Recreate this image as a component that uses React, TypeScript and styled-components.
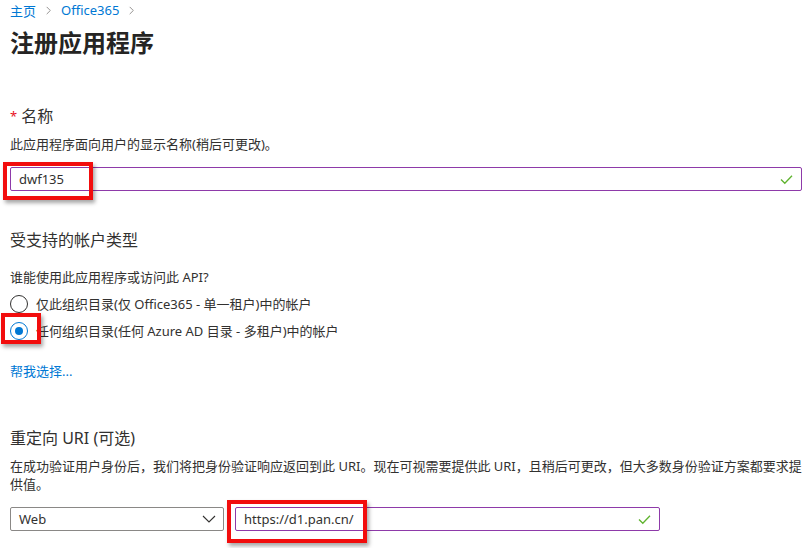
import React from 'react';
import styled, { createGlobalStyle } from 'styled-components';

const GlobalStyle = createGlobalStyle`
  html, body {
    margin: 0;
    padding: 0;
    background: #ffffff;
  }
  body {
    font-family: "Noto Sans", "Noto Sans CJK SC", sans-serif;
    color: #323130;
  }
`;

const Page = styled.div`
  width: 812px;
  height: 548px;
  overflow: hidden;
  padding: 0 10px;
  box-sizing: border-box;
`;

const Breadcrumb = styled.nav`
  display: flex;
  align-items: center;
  gap: 6px;
  height: 20px;
  font-size: 13px;

  a {
    color: #0078d4;
    text-decoration: none;
  }
`;

const Sep = styled.span`
  display: inline-flex;
  color: #8a8886;
  margin: 0 2px;
`;

const Title = styled.h1`
  margin: 9px 0 0 0;
  font-size: 24px;
  line-height: 28px;
  font-weight: 700;
  color: #252423;
`;

const Section = styled.section<{ $top: number }>`
  margin-top: ${({ $top }) => $top}px;
`;

const Heading = styled.h2`
  margin: 0;
  font-size: 16px;
  line-height: 22px;
  font-weight: 400;
  color: #323130;
`;

const Required = styled.span`
  color: #e81123;
  margin-right: 4px;
  font-size: 13px;
  vertical-align: top;
`;

const Help = styled.p<{ $top: number }>`
  margin: ${({ $top }) => $top}px 0 0 0;
  font-size: 13px;
  line-height: 18px;
  color: #323130;
`;

const Annotated = styled.div<{ $top?: number }>`
  position: relative;
  margin-top: ${({ $top }) => $top ?? 0}px;
`;

const Marker = styled.span<{ $l: number; $t: number; $w: number; $h: number }>`
  position: absolute;
  left: ${({ $l }) => $l}px;
  top: ${({ $t }) => $t}px;
  width: ${({ $w }) => $w}px;
  height: ${({ $h }) => $h}px;
  box-sizing: border-box;
  border: 4px solid #f20d0d;
  box-shadow: 2px 3px 4px rgba(0, 0, 0, 0.35);
  pointer-events: none;
`;

const Field = styled.div<{ $width?: number }>`
  display: flex;
  align-items: center;
  height: 24px;
  width: ${({ $width }) => ($width ? `${$width}px` : '100%')};
  box-sizing: border-box;
  border: 1px solid #8e3aa9;
  border-radius: 2px;
  padding: 0 8px;
  font-size: 13px;
  color: #323130;

  span {
    flex: 1;
  }
`;

const Check = styled.svg`
  width: 13px;
  height: 11px;
  flex-shrink: 0;
`;

const RadioList = styled.div`
  display: flex;
  flex-direction: column;
  gap: 9px;
  margin-top: 9px;
`;

const RadioRow = styled.label`
  display: flex;
  align-items: center;
  gap: 8px;
  font-size: 13px;
  line-height: 18px;
`;

const Circle = styled.span<{ $on?: boolean }>`
  width: 18px;
  height: 18px;
  box-sizing: border-box;
  border-radius: 50%;
  border: 1px solid ${({ $on }) => ($on ? '#0078d4' : '#323130')};
  display: flex;
  align-items: center;
  justify-content: center;

  &::after {
    content: '';
    width: 8px;
    height: 8px;
    border-radius: 50%;
    background: ${({ $on }) => ($on ? '#0078d4' : 'transparent')};
  }
`;

const Link = styled.a`
  display: block;
  margin-top: 22px;
  font-size: 13px;
  line-height: 18px;
  color: #0078d4;
  text-decoration: none;
`;

const UriRow = styled.div`
  display: flex;
  gap: 11px;
  margin-top: 14px;
`;

const Select = styled.div`
  display: flex;
  align-items: center;
  justify-content: space-between;
  width: 214px;
  height: 24px;
  box-sizing: border-box;
  border: 1px solid #8a8886;
  border-radius: 2px;
  padding: 0 7px 0 8px;
  font-size: 13px;
`;

const CheckMark = () => (
  <Check viewBox="0 0 13 11">
    <path d="M1 5.5 L4.8 9.3 L12 1.8" fill="none" stroke="#5fb32e" strokeWidth="1.3" />
  </Check>
);

const Chevron = ({ size = 9 }: { size?: number }) => (
  <svg width={size} height={size} viewBox="0 0 10 10">
    <path d="M3 1 L7 5 L3 9" fill="none" stroke="currentColor" strokeWidth="1" />
  </svg>
);

const App = () => {
  return (
    <>
      <GlobalStyle />
      <Page>
        <Breadcrumb>
          <a href="#">主页</a>
          <Sep>
            <Chevron />
          </Sep>
          <a href="#">Office365</a>
          <Sep>
            <Chevron />
          </Sep>
        </Breadcrumb>
        <Title>注册应用程序</Title>

        <Section $top={48}>
          <Heading>
            <Required>*</Required>名称
          </Heading>
          <Help $top={8}>此应用程序面向用户的显示名称(稍后可更改)。</Help>
          <Annotated $top={14}>
            <Field>
              <span>dwf135</span>
              <CheckMark />
            </Field>
            <Marker $l={-7} $t={-5} $w={90} $h={38} />
          </Annotated>
        </Section>

        <Section $top={38}>
          <Heading>受支持的帐户类型</Heading>
          <Help $top={17}>谁能使用此应用程序或访问此 API?</Help>
          <RadioList>
            <RadioRow>
              <Circle />
              仅此组织目录(仅 Office365 - 单一租户)中的帐户
            </RadioRow>
            <Annotated>
              <RadioRow>
                <Circle $on />
                任何组织目录(任何 Azure AD 目录 - 多租户)中的帐户
              </RadioRow>
              <Marker $l={-9} $t={-9} $w={40} $h={31} />
            </Annotated>
          </RadioList>
          <Link href="#">帮我选择...</Link>
        </Section>

        <Section $top={47}>
          <Heading>重定向 URI (可选)</Heading>
          <Help $top={8}>
            在成功验证用户身份后，我们将把身份验证响应返回到此 URI。现在可视需要提供此 URI，且稍后可更改，但大多数身份验证方案都要求提供值。
          </Help>
          <UriRow>
            <Select>
              <span>Web</span>
              <svg width="14" height="8" viewBox="0 0 14 8">
                <path d="M1 1 L7 7 L13 1" fill="none" stroke="#323130" strokeWidth="1.1" />
              </svg>
            </Select>
            <Annotated>
              <Field $width={425}>
                <span>https://d1.pan.cn/</span>
                <CheckMark />
              </Field>
              <Marker $l={-8} $t={-7} $w={140} $h={43} />
            </Annotated>
          </UriRow>
        </Section>
      </Page>
    </>
  );
};

export default App;
